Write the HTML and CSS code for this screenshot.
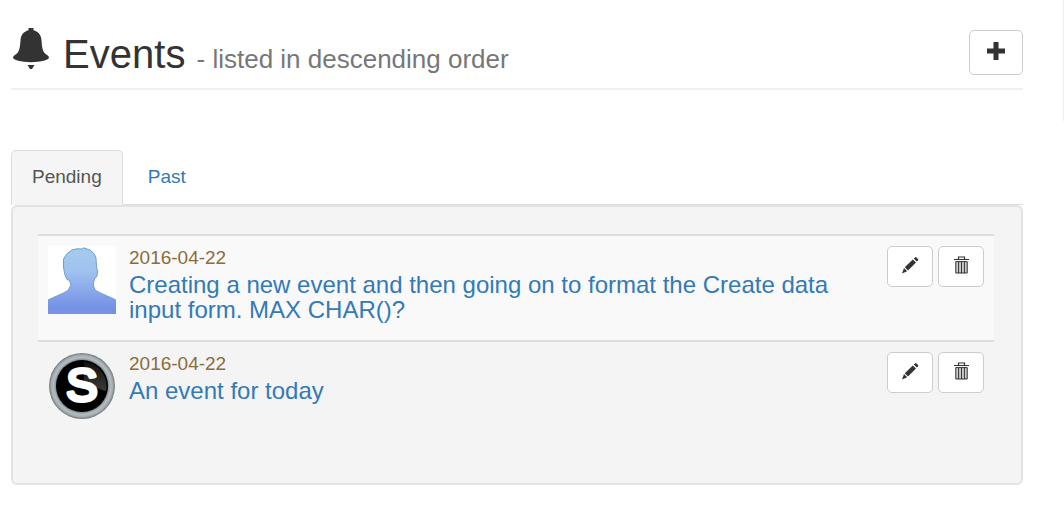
FILE: index.html
```html
<!DOCTYPE html>
<html lang="en">
<head>
  <meta charset="UTF-8">
  <meta name="viewport" content="width=device-width, initial-scale=1.0">
  <title>Events</title>
  <link rel="stylesheet" href="styles.css">
</head>
<body>
  <!-- Shared icons -->
  <svg class="icon-defs" aria-hidden="true">
    <symbol id="icon-pencil" viewBox="0 0 18 18">
      <path d="M12.800 2.600l1.200-1.200q.8-.7 1.500 0l1.500 1.500q.7.700 0 1.500L15.800 5.600zM11.800 3.400l3.200 3.200-8 7.800-3.200-3.200zM3 12l3.200 3.200L1 17.400z"/>
    </symbol>
    <symbol id="icon-trash" viewBox="0 0 18 18">
      <path d="M3.500 5.500h12V17h-12z" fill="#ccc"/>
      <path d="M2 3.500h15M6.500 3V1h6v2" fill="none" stroke="currentColor" stroke-width="1.200"/>
      <path d="M3.800 5.600h11.400V17H3.800zM6.600 6v11M9.500 6v11M12.400 6v11" fill="none" stroke="currentColor" stroke-width="1"/>
    </symbol>
  </svg>

  <div class="layout">
    <main class="content">
      <header class="page-header">
        <h1>
          <svg class="bell" viewBox="0 0 36 41" aria-hidden="true">
            <path d="M15.500 0h5v2.200C25.500 3.500 28 7 28.500 12c.4 6.500 1 11 3.500 13.500 1.800 1.600 4 2.300 4 4 0 2.500-8 4.700-18 4.700S0 32 0 29.500c0-1.700 2.200-2.400 4-4C6.500 23 7.100 18.500 7.500 12 8 7 10.500 3.500 15.500 2.200z"/>
            <path d="M14.500 37h7L19 41h-2z"/>
          </svg>
          Events <small>- listed in descending order</small>
        </h1>
        <button type="button" class="btn btn-add" aria-label="Add event">
          <svg class="icon-plus" viewBox="0 0 18 18" aria-hidden="true"><path d="M6.500 0h5v6.500H18v5h-6.500V18h-5v-6.500H0v-5h6.500z"/></svg>
        </button>
      </header>

      <nav class="tabs">
        <a href="#pending" class="tab active">Pending</a>
        <a href="#past" class="tab">Past</a>
      </nav>

      <section class="well" id="pending">
        <table class="events">
          <tbody>
            <tr>
              <td class="avatar-cell">
                <svg class="avatar" viewBox="0 0 68 68" aria-hidden="true">
                  <defs>
                    <linearGradient id="person" x1="0" y1="0" x2="0" y2="1">
                      <stop offset="0" stop-color="#a6cbee"/>
                      <stop offset="0.350" stop-color="#a0c2ee"/>
                      <stop offset="0.900" stop-color="#7590e6"/>
                      <stop offset="1" stop-color="#7b93e3"/>
                    </linearGradient>
                  </defs>
                  <rect width="68" height="68" fill="#fff"/>
                  <path d="M-1 69V54.500C6 51 14 48 20 44.500L23 39L21.500 34.500L19 33.500Q17 30 16.500 27L15.500 21L15.500 13Q18 7 24 4Q29 2 34 3L36 1.800L39 3Q46 5 48 12L48.500 21L49.500 25L49 30L47 32.500L45.500 36V40L47.500 44.500C54 48 62 51 69 54.500V69z" fill="url(#person)" stroke="#6fa0d0" stroke-width="1"/>
                </svg>
              </td>
              <td>
                <div class="date">2016-04-22</div>
                <a href="#event-1" class="title">Creating a new event and then going on to format the Create data input form. MAX CHAR()?</a>
              </td>
              <td class="actions-cell">
                <div class="actions">
                  <button type="button" class="btn" aria-label="Edit event"><svg class="icon" aria-hidden="true"><use href="#icon-pencil"/></svg></button>
                  <button type="button" class="btn" aria-label="Delete event"><svg class="icon" aria-hidden="true"><use href="#icon-trash"/></svg></button>
                </div>
              </td>
            </tr>
            <tr>
              <td class="avatar-cell">
                <svg class="avatar" viewBox="0 0 68 68" aria-hidden="true">
                  <defs>
                    <radialGradient id="ring">
                      <stop offset="0.780" stop-color="#7d878b"/>
                      <stop offset="0.860" stop-color="#b3bec2"/>
                      <stop offset="0.930" stop-color="#a5adb0"/>
                      <stop offset="1" stop-color="#707577"/>
                    </radialGradient>
                    <linearGradient id="gloss" x1="0" y1="0" x2="0" y2="1">
                      <stop offset="0" stop-color="#111"/>
                      <stop offset="1" stop-color="#3a3a3a"/>
                    </linearGradient>
                  </defs>
                  <circle cx="34" cy="34" r="33" fill="url(#ring)"/>
                  <circle cx="34" cy="34" r="26" fill="#000"/>
                  <path d="M36 10a24 24 0 0 1 22 29C52 38 44 32 36 32z" fill="url(#gloss)"/>
                  <text class="avatar-letter" x="34" y="49" text-anchor="middle">S</text>
                </svg>
              </td>
              <td>
                <div class="date">2016-04-22</div>
                <a href="#event-2" class="title">An event for today</a>
              </td>
              <td class="actions-cell">
                <div class="actions">
                  <button type="button" class="btn" aria-label="Edit event"><svg class="icon" aria-hidden="true"><use href="#icon-pencil"/></svg></button>
                  <button type="button" class="btn" aria-label="Delete event"><svg class="icon" aria-hidden="true"><use href="#icon-trash"/></svg></button>
                </div>
              </td>
            </tr>
          </tbody>
        </table>
      </section>
    </main>
    <aside class="side"></aside>
  </div>
</body>
</html>
```

FILE: styles.css
```css
* {
  box-sizing: border-box;
}

body {
  margin: 0;
  background: #fff;
  color: #333;
  font-family: "Liberation Sans", Arial, sans-serif;
  font-size: 19px;
  line-height: 27px;
}

a {
  color: #337ab7;
  text-decoration: none;
}

.icon-defs {
  display: none;
}

.layout {
  display: flex;
  align-items: flex-start;
}

.content {
  flex: 1;
  padding: 28px 40px 0 11px;
}

.side {
  width: 1px;
  height: 121px;
  background: #eee;
}

/* Header */
.page-header {
  display: flex;
  justify-content: space-between;
  align-items: flex-start;
  height: 62px;
  margin-bottom: 60px;
  padding-top: 2px;
  border-bottom: 2px solid #f0f0f0;
}

h1 {
  margin: 0;
  font-size: 40px;
  font-weight: normal;
  line-height: 48px;
}

h1 small {
  color: #777;
  font-size: 26px;
}

.bell {
  width: 36px;
  height: 41px;
  margin: -2px 3px 0 2px;
  vertical-align: top;
  fill: #333;
}

/* Buttons */
.btn {
  display: flex;
  justify-content: center;
  align-items: center;
  width: 46px;
  height: 41px;
  padding: 0 0 4px;
  border: 1px solid #ccc;
  border-radius: 5px;
  background: #fff;
  color: #333;
  cursor: pointer;
}

.btn:hover {
  background: #e6e6e6;
}

.btn-add {
  width: 54px;
  height: 45px;
}

.icon-plus {
  width: 18px;
  height: 18px;
  fill: currentColor;
}

.icon {
  width: 18px;
  height: 18px;
  fill: currentColor;
}

/* Tabs */
.tabs {
  display: flex;
  gap: 4px;
  border-bottom: 1px solid #ddd;
}

.tab {
  padding: 12px 20px 14px;
  border: 1px solid transparent;
  border-bottom: 0;
  border-radius: 5px 5px 0 0;
}

.tab.active {
  margin-bottom: -1px;
  padding-bottom: 15px;
  border-color: #ddd;
  background: #f5f5f5;
  color: #555;
}

/* Event list */
.well {
  min-height: 280px;
  padding: 27px 27px 27px 25px;
  border: 2px solid #e3e3e3;
  border-radius: 6px;
  background: #f4f4f4;
}

.events {
  width: 100%;
  border-collapse: collapse;
}

.events tr {
  height: 106px;
}

.events tr:nth-child(odd) {
  background: #f9f9f9;
}

.events td {
  padding: 10px;
  border-top: 2px solid #ddd;
  vertical-align: top;
}

.events .avatar-cell {
  width: 81px;
  padding-right: 3px;
}

.events .actions-cell {
  width: 117px;
}

.avatar {
  display: block;
  width: 68px;
  height: 68px;
}

.avatar-letter {
  fill: #fff;
  stroke: #fff;
  stroke-width: 4;
  stroke-linejoin: round;
  font-size: 47px;
}

.date {
  margin-bottom: 2px;
  color: #8a6d3b;
  line-height: 24px;
}

.title {
  display: block;
  font-size: 24px;
  line-height: 25px;
}

.actions {
  display: flex;
  gap: 5px;
}
```
